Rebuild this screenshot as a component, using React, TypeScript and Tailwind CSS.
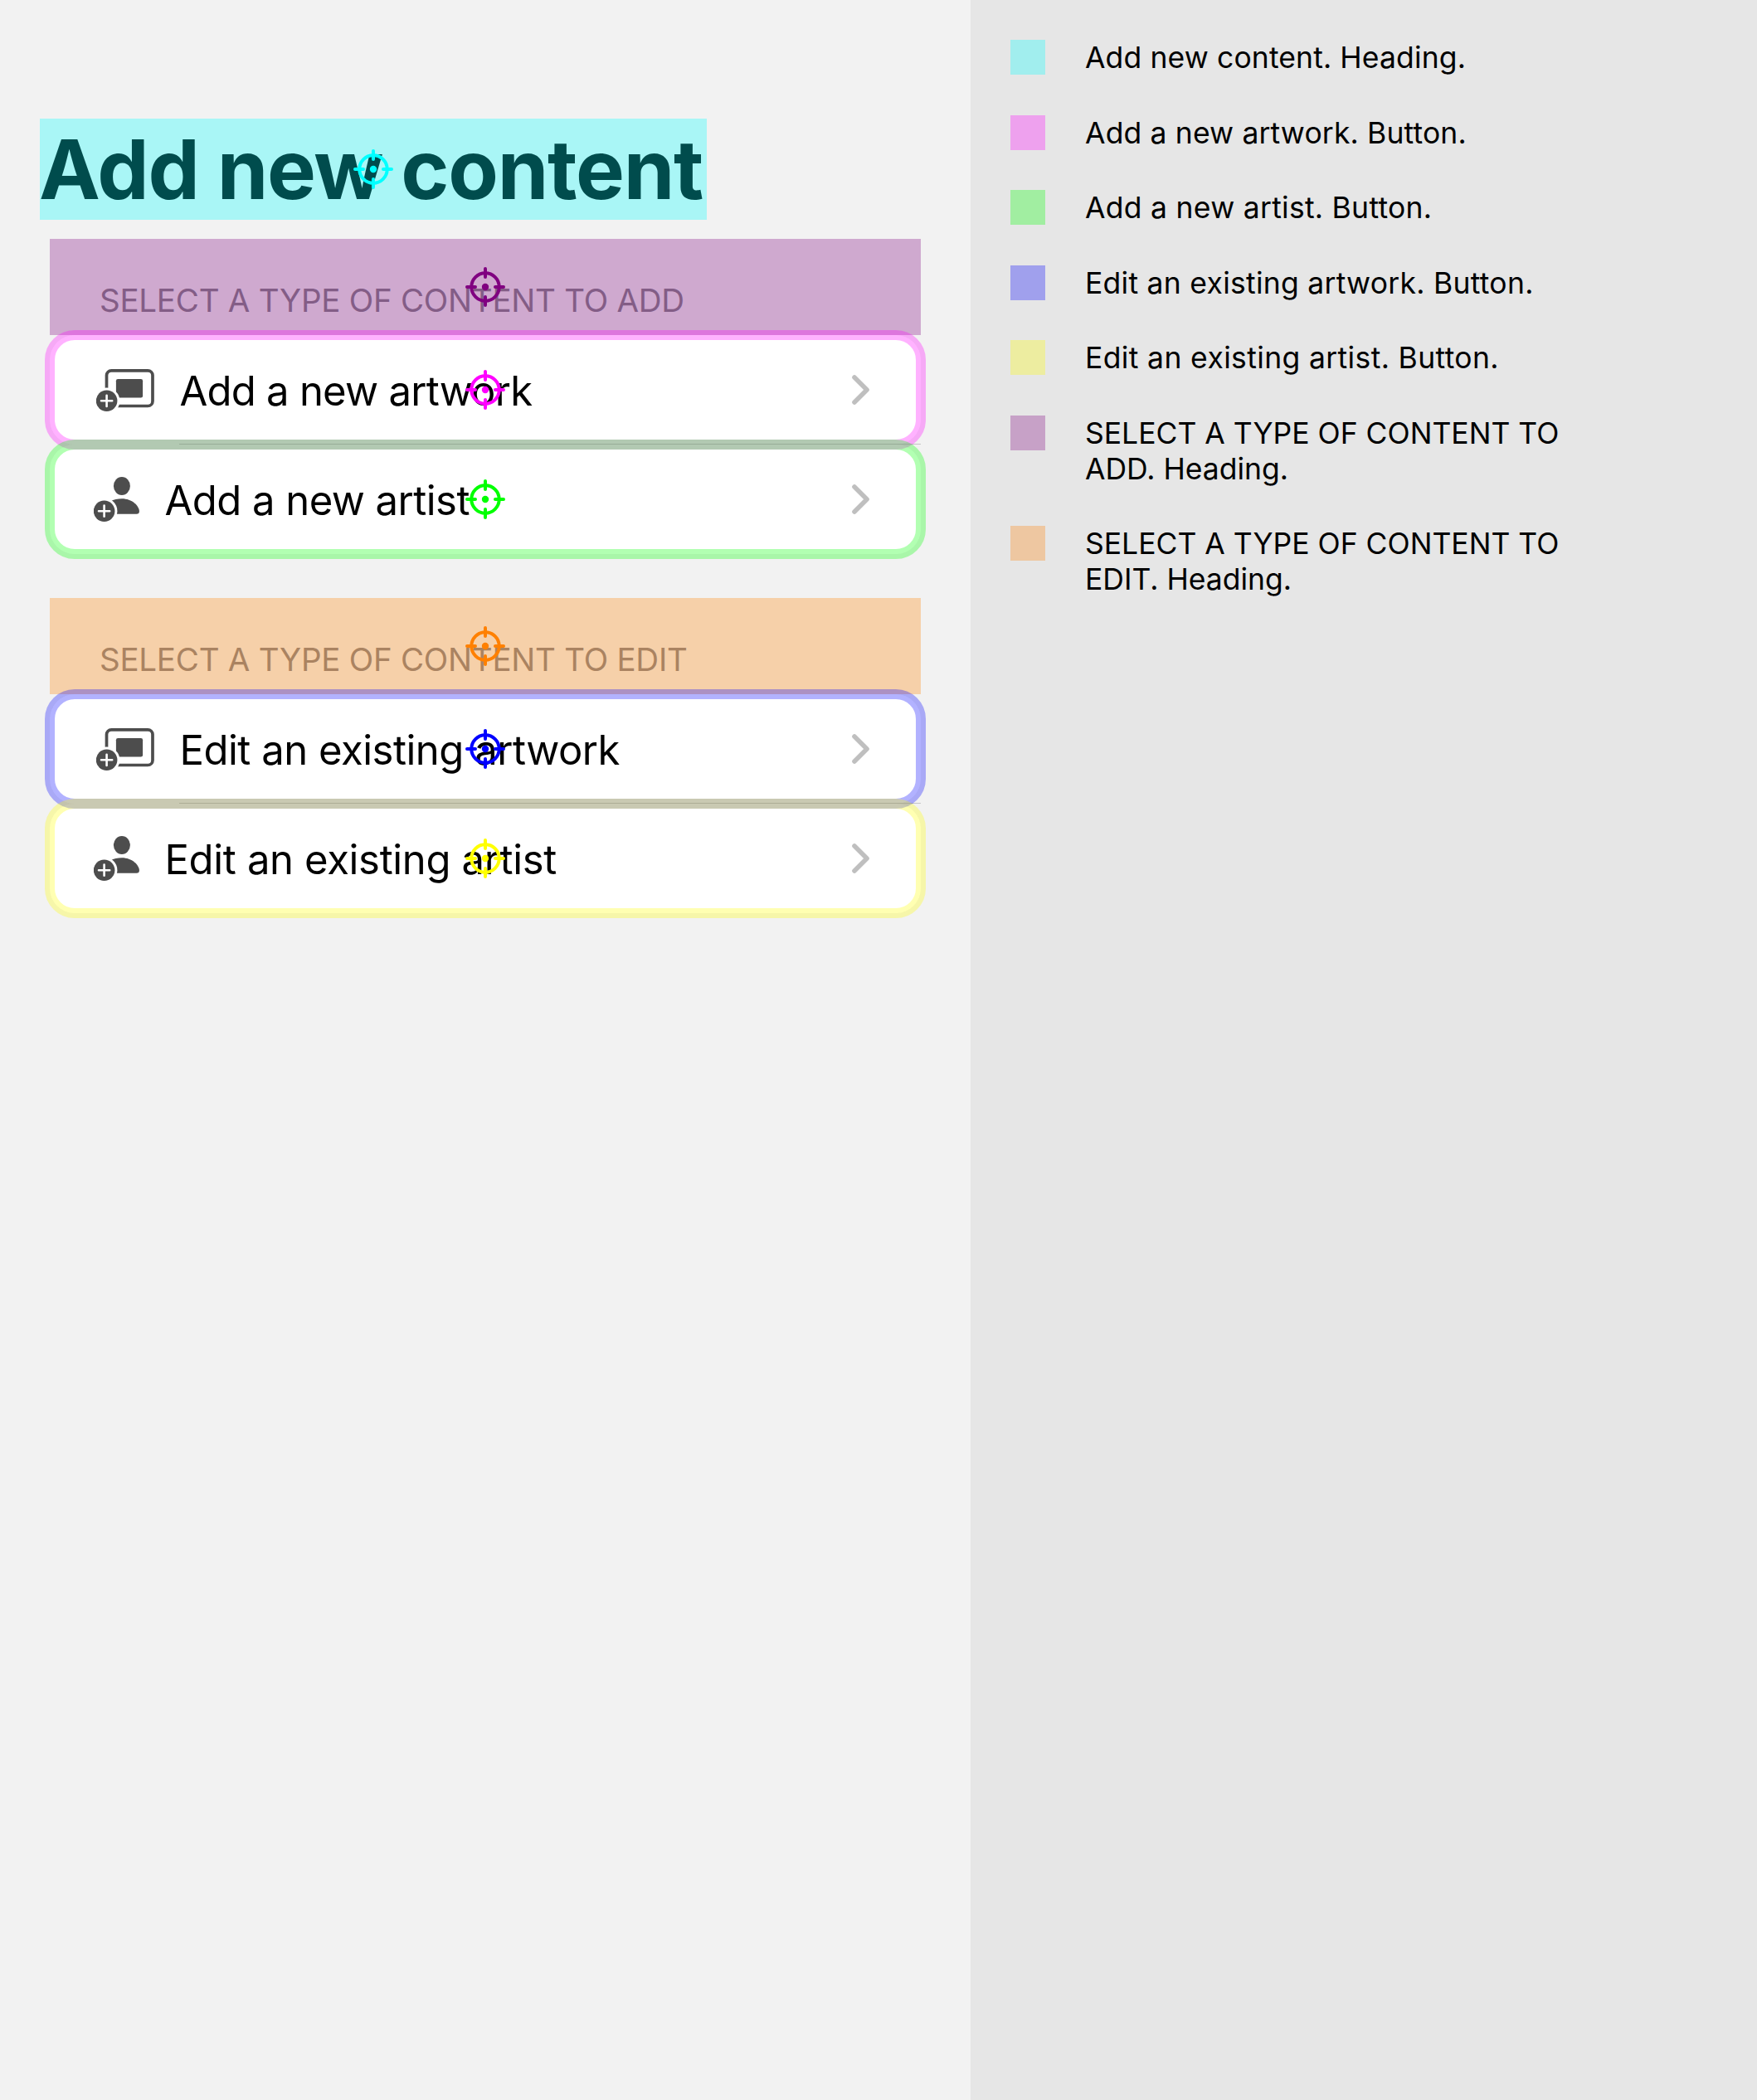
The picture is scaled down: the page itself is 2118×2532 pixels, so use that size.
import React from "react";

function Crosshair({ color }: { color: string }) {
  return (
    <svg
      className="absolute left-1/2 top-1/2 size-12 -translate-x-1/2 -translate-y-1/2 overflow-visible"
      viewBox="-24 -24 48 48"
      fill="none"
      stroke={color}
      strokeWidth="4"
      strokeLinecap="round"
    >
      <circle r="16.7" />
      <path d="M0 -22V-12M0 22V12M-22 0H-12M22 0H12" />
      <circle r="4.2" fill={color} stroke="none" />
    </svg>
  );
}

function PlusBadge({ cx, cy }: { cx: number; cy: number }) {
  return (
    <g>
      <circle cx={cx} cy={cy} r="15.8" fill="#fff" />
      <circle cx={cx} cy={cy} r="12.8" fill="#4d4d4d" />
      <path
        d={`M${cx - 6.6} ${cy}h13.2M${cx} ${cy - 6.6}v13.2`}
        stroke="#fff"
        strokeWidth="2.6"
        strokeLinecap="round"
      />
    </g>
  );
}

function ArtworkIcon() {
  return (
    <svg className="block h-[54px] w-[72px] shrink-0" viewBox="0 0 72 54" fill="none">
      <rect x="12.5" y="3.8" width="55.5" height="42.7" rx="5.8" stroke="#4d4d4d" strokeWidth="3.7" />
      <rect x="23.9" y="14" width="32.2" height="22.5" rx="2.2" fill="#4d4d4d" />
      <PlusBadge cx={12.6} cy={40.3} />
    </svg>
  );
}

function ArtistIcon() {
  return (
    <svg className="block h-[56px] w-[60px] shrink-0" viewBox="0 0 60 56" fill="none">
      <ellipse cx="33.9" cy="12" rx="10" ry="11" fill="#4d4d4d" />
      <path
        d="M20 45.8V30.5C24 28.5 29 27.3 34 27.3C46 27.3 54.9 36 54.9 42.6C54.9 45 53.8 45.8 51.5 45.8Z"
        fill="#4d4d4d"
      />
      <PlusBadge cx={12.6} cy={42.2} />
    </svg>
  );
}

function Chevron() {
  return (
    <svg className="ml-auto block h-9 w-[22px] shrink-0" viewBox="0 0 22 36" fill="none">
      <path
        d="M3 3L18 18L3 33"
        stroke="#bfbfbf"
        strokeWidth="5.6"
        strokeLinecap="round"
        strokeLinejoin="round"
      />
    </svg>
  );
}

type RowProps = {
  kind: "artwork" | "artist";
  label: string;
  border: string;
  color: string;
  spacing: string;
};

function Row({ kind, label, border, color, spacing }: RowProps) {
  const artwork = kind === "artwork";
  return (
    <button
      className={`relative flex h-[132px] w-full items-center pr-[61px] text-left ${
        artwork ? "pl-[56px]" : "pl-[53px]"
      }`}
    >
      {/* Row fill sits below every highlight so neighbouring borders blend */}
      <span className="absolute inset-0 -z-10 rounded-[30px] bg-white" />
      {artwork ? <ArtworkIcon /> : <ArtistIcon />}
      <span
        className={`whitespace-nowrap pt-[3px] text-[49px] leading-[60px] text-black ${spacing} ${
          artwork ? "ml-[28.5px]" : "ml-[25.5px]"
        }`}
      >
        {label}
      </span>
      <Chevron />
      {artwork && <span className="absolute bottom-0 left-[156px] right-0 h-px bg-[#c6c6c8]" />}
      <span className={`absolute -inset-1.5 rounded-[36px] border-12 ${border}`} />
      <Crosshair color={color} />
    </button>
  );
}

type SectionProps = {
  title: string;
  tint: string;
  color: string;
  rows: RowProps[];
};

function Section({ title, tint, color, rows }: SectionProps) {
  return (
    <section className="mx-[60px]">
      <div className="relative flex h-[116px] items-end pb-[18px] pl-[60px]">
        <h2 className="whitespace-nowrap text-[38.5px] leading-[48px] tracking-[-0.25px] text-[#85858a]">
          {title}
        </h2>
        <span className={`absolute inset-0 ${tint}`} />
        <Crosshair color={color} />
      </div>
      <div className="isolate">
        {rows.map((row) => (
          <Row key={row.label} {...row} />
        ))}
      </div>
    </section>
  );
}

const sections: SectionProps[] = [
  {
    title: "SELECT A TYPE OF CONTENT TO ADD",
    tint: "bg-[#800080]/30",
    color: "#800080",
    rows: [
      { kind: "artwork", label: "Add a new artwork", border: "border-[#ff00ff]/30", color: "#ff00ff", spacing: "tracking-[-0.75px]" },
      { kind: "artist", label: "Add a new artist", border: "border-[#00ff00]/30", color: "#00ff00", spacing: "tracking-[-0.53px]" },
    ],
  },
  {
    title: "SELECT A TYPE OF CONTENT TO EDIT",
    tint: "bg-[#ff8000]/30",
    color: "#ff8000",
    rows: [
      { kind: "artwork", label: "Edit an existing artwork", border: "border-[#0000ff]/30", color: "#0000ff", spacing: "tracking-[-0.49px]" },
      { kind: "artist", label: "Edit an existing artist", border: "border-[#ffff00]/30", color: "#ffff00", spacing: "tracking-[-0.35px]" },
    ],
  },
];

const legend = [
  { tint: "bg-[#00ffff]/30", spacing: "tracking-[0.12px]", text: "Add new content. Heading." },
  { tint: "bg-[#ff00ff]/30", spacing: "tracking-[0.15px]", text: "Add a new artwork. Button." },
  { tint: "bg-[#00ff00]/30", spacing: "tracking-[0.28px]", text: "Add a new artist. Button." },
  { tint: "bg-[#0000ff]/30", spacing: "tracking-[0.27px]", text: "Edit an existing artwork. Button." },
  { tint: "bg-[#ffff00]/30", spacing: "tracking-[0.37px]", text: "Edit an existing artist. Button." },
  { tint: "bg-[#800080]/30", spacing: "tracking-[0px]", text: "SELECT A TYPE OF CONTENT TO ADD. Heading." },
  { tint: "bg-[#ff8000]/30", spacing: "tracking-[0px]", text: "SELECT A TYPE OF CONTENT TO EDIT. Heading." },
];

export default function App() {
  return (
    <div className="flex h-[2532px] w-[2118px] overflow-hidden font-['Inter',sans-serif]">
      <main className="w-[1170px] shrink-0 bg-[#f2f2f2] pt-[143px]">
        <div className="relative ml-12 flex h-[122px] w-[804px] items-center">
          <h1 className="-ml-px whitespace-nowrap text-[99px] font-bold leading-[122px] tracking-[-1.3px] text-black">
            Add new content
          </h1>
          <span className="absolute inset-0 bg-[#00ffff]/30" />
          <Crosshair color="#00ffff" />
        </div>
        <div className="mt-[23px] flex flex-col gap-[53px]">
          {sections.map((section) => (
            <Section key={section.title} {...section} />
          ))}
        </div>
      </main>
      <aside className="flex-1 bg-[#e6e6e6] pl-12 pt-12">
        <ul className="flex flex-col gap-[47.5px]">
          {legend.map(({ tint, text, spacing }) => (
            <li key={text} className="flex items-start gap-12">
              <span className={`size-[42px] shrink-0 ${tint}`} />
              <span className={`w-[620px] text-[35.5px] leading-[43px] text-black ${spacing}`}>{text}</span>
            </li>
          ))}
        </ul>
      </aside>
    </div>
  );
}
